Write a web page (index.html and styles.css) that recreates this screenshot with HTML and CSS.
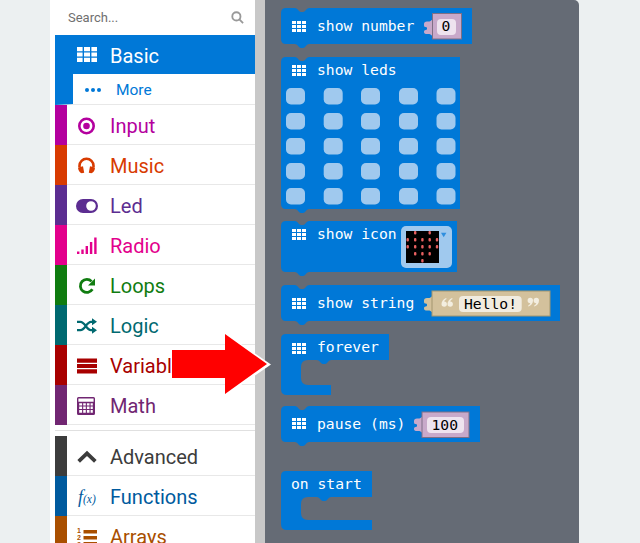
FILE: index.html
```html
<!DOCTYPE html>
<html lang="en">
<head>
<meta charset="utf-8">
<title>Basic blocks</title>
<link rel="stylesheet" href="styles.css">
</head>
<body>
<div class="page">
  <aside class="toolbox">
    <div class="search"><span>Search...</span>
      <svg class="search-icon" viewBox="0 0 14 14"><circle cx="5.8" cy="5.8" r="4.4"/><path d="M9 9l4 4"/></svg>
    </div>
    <div class="cat basic">
      <svg class="ico" viewBox="0 0 20 15"><path d="M0 0h5.600v4.200H0zM7 0h6v4.200H7zM14.400 0H20v4.200h-5.600zM0 5.400h5.600v4.200H0zM7 5.400h6v4.200H7zM14.400 5.400H20v4.200h-5.600zM0 10.800h5.600V15H0zM7 10.800h6V15H7zM14.400 10.800H20V15h-5.600z"/></svg>
      <span>Basic</span>
    </div>
    <div class="more">
      <svg class="ico-more" viewBox="0 0 16 4"><circle cx="2" cy="2" r="2"/><circle cx="8" cy="2" r="2"/><circle cx="14" cy="2" r="2"/></svg>
      <span>More</span>
    </div>
    <div class="cat row c-input">
      <svg class="ico" viewBox="0 0 20 20"><circle cx="9.500" cy="10" r="7.200" fill="none" stroke="currentColor" stroke-width="2.600"/><circle cx="9.500" cy="10" r="3.300"/></svg>
      <span>Input</span>
    </div>
    <div class="cat row c-music">
      <svg class="ico" viewBox="0 0 20 20"><path d="M2.500 11V9.800a7 7 0 0 1 14 0V11" fill="none" stroke="currentColor" stroke-width="2.600"/><path d="M1 11.500l5-1.200 1.200 6.500-2.500.5C2.500 16.500 1 14 1 11.500zM18 11.500l-5-1.200-1.200 6.500 2.500.5c2.200-.5 3.700-3 3.700-5.800z"/></svg>
      <span>Music</span>
    </div>
    <div class="cat row c-led">
      <svg class="ico ico-led" viewBox="0 0 22 14"><path fill-rule="evenodd" d="M7 0h8a7 7 0 0 1 0 14H7A7 7 0 0 1 7 0zm8 2.200a4.800 4.800 0 1 0 0 9.600 4.800 4.800 0 0 0 0-9.600z"/></svg>
      <span>Led</span>
    </div>
    <div class="cat row c-radio">
      <svg class="ico" viewBox="0 0 20 20"><path d="M0 15.500h2.400v2.500H0zM4.300 13.500h2.400V18H4.300zM8.600 10h2.400v8H8.600zM12.900 6h2.400v12h-2.400zM17.200 1.500h2.400V18h-2.400z"/></svg>
      <span>Radio</span>
    </div>
    <div class="cat row c-loops">
      <svg class="ico" viewBox="0 0 20 20"><path d="M15.400 13.300A6.500 6.500 0 1 1 14.600 5.400" fill="none" stroke="currentColor" stroke-width="2.800"/><path d="M18 2.500v7h-7z"/></svg>
      <span>Loops</span>
    </div>
    <div class="cat row c-logic">
      <svg class="ico" viewBox="0 0 20 15.400"><path d="M0 3.500h3.500c4.500 0 6 8.400 10.500 8.400h2M0 11.900h3.500c4.500 0 6-8.400 10.500-8.400h2" fill="none" stroke="currentColor" stroke-width="2.200"/><path d="M15 0l5 3.500-5 3.500zM15 8.400l5 3.500-5 3.500z"/></svg>
      <span>Logic</span>
    </div>
    <div class="cat row c-vars">
      <svg class="ico" viewBox="0 0 20 15"><path d="M0 0h20v4.200H0zM0 5.400h20v4.200H0zM0 10.800h20V15H0z"/></svg>
      <span>Variables</span>
    </div>
    <div class="cat row c-math">
      <svg class="ico ico-math" viewBox="0 0 18 18"><path fill-rule="evenodd" d="M1.500 0h15A1.500 1.500 0 0 1 18 1.500v15a1.500 1.500 0 0 1-1.500 1.500h-15A1.500 1.500 0 0 1 0 16.500v-15A1.500 1.500 0 0 1 1.500 0zM1.400 1.400v3.400h15.200V1.400zM2.200 6.200v2.400h2.900V6.200zM6.200 6.200v2.400h2.600V6.200zM9.900 6.200v2.400h2.600V6.200zM13.600 6.200v2.400h2.200V6.200zM2.200 9.600v2.400h2.900V9.600zM6.200 9.600v2.400h2.600V9.600zM9.900 9.600v2.400h2.600V9.600zM13.600 9.600v2.400h2.200V9.600zM2.200 13v2.800h2.900V13zM6.200 13v2.800h2.600V13zM9.900 13v2.800h2.600V13zM13.600 13v2.800h2.200V13z"/></svg>
      <span>Math</span>
    </div>
    <div class="divider"></div>
    <div class="cat row c-adv">
      <svg class="ico" viewBox="0 0 18 12"><path d="M1.500 10L9 2.800l7.500 7.200" fill="none" stroke="currentColor" stroke-width="3.400"/></svg>
      <span>Advanced</span>
    </div>
    <div class="cat row c-func">
      <span class="ico fx"><i>f</i><small>(x)</small></span>
      <span>Functions</span>
    </div>
    <div class="cat row c-arr">
      <svg class="ico" viewBox="0 0 20 20"><path d="M6.500 3h13.500v3.400H6.500zM6.500 9h13.500v3.400H6.500zM6.500 15h13.500v3.400H6.500z"/><text x="0" y="6" class="arr-num">1</text><text x="0" y="13" class="arr-num">2</text><text x="0" y="20" class="arr-num">3</text></svg>
      <span>Arrays</span>
    </div>
  </aside>
  <div class="gutter"></div>
  <main class="workspace">
    <svg class="blocks" viewBox="0 0 314 543" width="314" height="543">
      <defs>
        <path id="grid" d="M0 0h4v3H0zM5 0h4v3H5zM10 0h4v3h-4zM0 4h4v3H0zM5 4h4v3H5zM10 4h4v3h-4zM0 8h4v3H0zM5 8h4v3H5zM10 8h4v3h-4z"/>
        <path id="tab" d="M168 19l-2.500 2-1 .5h-2.500q-3 0-3 2.500v1.500q0 1.500 1.500 1.500t1.500 1v1q0 1-1.500 1t-1.500 1.500v.5q0 2 3 2h2.500l1 .5 2.500 2z"/>
        <path id="qmark" d="M2.700 3.400a2.700 2.700 0 1 1-2.700 2.700C0 3.500 1.800 1 4.600 0l.5.900C3.700 1.700 3 2.500 2.700 3.400z"/>
        <g id="lquote"><use href="#qmark"/><use href="#qmark" x="6"/></g>
      </defs>

      <!-- show number -->
      <path class="blk" d="M16 13q0-5 5-5H30q2 0 4 3q1 1 2 1h2q1 0 2-1q2-3 4-3H207V44H44q-2 0-4 3q-1 1-2 1h-2q-1 0-2-1q-2-3-4-3H21q-5 0-5-5z"/>
      <use class="white" href="#grid" x="27" y="21"/>
      <text class="lbl" x="52" y="31">show number</text>
      <use class="num-tab" href="#tab"/>
      <rect class="num-plug" x="167.500" y="13.500" width="29" height="25.500"/>
      <rect class="field-num" x="172" y="19" width="19" height="16" rx="4"/>
      <text class="val" x="176.600" y="31">0</text>

      <!-- show leds -->
      <path class="blk" d="M16 62q0-5 5-5H30q2 0 4 3q1 1 2 1h2q1 0 2-1q2-3 4-3H195V209H44q-2 0-4 3q-1 1-2 1h-2q-1 0-2-1q-2-3-4-3H21q-5 0-5-5z"/>
      <use class="white" href="#grid" x="27" y="65"/>
      <text class="lbl" x="52" y="75">show leds</text>
      <g class="leds">
        <rect x="21" y="88" width="19" height="16.500" rx="5"/><rect x="58.700" y="88" width="19" height="16.500" rx="5"/><rect x="96" y="88" width="19" height="16.500" rx="5"/><rect x="134" y="88" width="19" height="16.500" rx="5"/><rect x="171.500" y="88" width="19" height="16.500" rx="5"/>
        <rect x="21" y="113" width="19" height="16.500" rx="5"/><rect x="58.700" y="113" width="19" height="16.500" rx="5"/><rect x="96" y="113" width="19" height="16.500" rx="5"/><rect x="134" y="113" width="19" height="16.500" rx="5"/><rect x="171.500" y="113" width="19" height="16.500" rx="5"/>
        <rect x="21" y="138" width="19" height="16.500" rx="5"/><rect x="58.700" y="138" width="19" height="16.500" rx="5"/><rect x="96" y="138" width="19" height="16.500" rx="5"/><rect x="134" y="138" width="19" height="16.500" rx="5"/><rect x="171.500" y="138" width="19" height="16.500" rx="5"/>
        <rect x="21" y="163" width="19" height="16.500" rx="5"/><rect x="58.700" y="163" width="19" height="16.500" rx="5"/><rect x="96" y="163" width="19" height="16.500" rx="5"/><rect x="134" y="163" width="19" height="16.500" rx="5"/><rect x="171.500" y="163" width="19" height="16.500" rx="5"/>
        <rect x="21" y="188" width="19" height="16.500" rx="5"/><rect x="58.700" y="188" width="19" height="16.500" rx="5"/><rect x="96" y="188" width="19" height="16.500" rx="5"/><rect x="134" y="188" width="19" height="16.500" rx="5"/><rect x="171.500" y="188" width="19" height="16.500" rx="5"/>
      </g>

      <!-- show icon -->
      <path class="blk" d="M16 226q0-5 5-5H30q2 0 4 3q1 1 2 1h2q1 0 2-1q2-3 4-3H192V272H44q-2 0-4 3q-1 1-2 1h-2q-1 0-2-1q-2-3-4-3H21q-5 0-5-5z"/>
      <use class="white" href="#grid" x="27" y="229"/>
      <text class="lbl" x="52" y="239">show icon</text>
      <rect class="leds-solid" x="136" y="226" width="51" height="42" rx="5"/>
      <rect class="matrix" x="141" y="231" width="33" height="32"/>
      <g class="pix">
        <rect x="149" y="231" width="2.400" height="3.600" rx="1"/><rect x="163.500" y="231" width="2.400" height="3.600" rx="1"/>
        <rect x="141.500" y="238" width="2.400" height="3.600" rx="1"/><rect x="149" y="238" width="2.400" height="3.600" rx="1"/><rect x="156.200" y="238" width="2.400" height="3.600" rx="1"/><rect x="163.500" y="238" width="2.400" height="3.600" rx="1"/><rect x="170.800" y="238" width="2.400" height="3.600" rx="1"/>
        <rect x="141.500" y="245" width="2.400" height="3.600" rx="1"/><rect x="149" y="245" width="2.400" height="3.600" rx="1"/><rect x="156.200" y="245" width="2.400" height="3.600" rx="1"/><rect x="163.500" y="245" width="2.400" height="3.600" rx="1"/><rect x="170.800" y="245" width="2.400" height="3.600" rx="1"/>
        <rect x="149" y="252" width="2.400" height="3.600" rx="1"/><rect x="156.200" y="252" width="2.400" height="3.600" rx="1"/><rect x="163.500" y="252" width="2.400" height="3.600" rx="1"/>
        <rect x="156.200" y="259" width="2.400" height="3.600" rx="1"/>
      </g>
      <path class="caret" d="M176 232.700h5.400l-2.700 4.600z"/>

      <!-- show string -->
      <path class="blk" d="M16 290q0-5 5-5H30q2 0 4 3q1 1 2 1h2q1 0 2-1q2-3 4-3H295V321H44q-2 0-4 3q-1 1-2 1h-2q-1 0-2-1q-2-3-4-3H21q-5 0-5-5z"/>
      <use class="white" href="#grid" x="27" y="298"/>
      <text class="lbl" x="52" y="308">show string</text>
      <use class="str-tab" href="#tab" y="276.500"/>
      <rect class="str-plug" x="167" y="291" width="118" height="25"/>
      <use class="quote" href="#lquote" x="176.500" y="298"/>
      <rect class="field-str" x="194" y="296" width="62.700" height="16" rx="4"/>
      <text class="val" x="199" y="308.500">Hello!</text>
      <use class="quote" href="#lquote" transform="rotate(180 268.500 302.300)" x="263" y="298"/>

      <!-- forever -->
      <path class="blk" d="M16 339q0-5 5-5H124V360H66q-2 0-4 3q-1 1-2 1h-2q-1 0-2-1q-2-3-4-3H43q-7 0-7 7V378q0 7 7 7H66V395H22q-6 0-6-6z"/>
      <use class="white" href="#grid" x="27" y="343"/>
      <text class="lbl" x="52" y="352">forever</text>

      <!-- pause -->
      <path class="blk" d="M16 411q0-5 5-5H30q2 0 4 3q1 1 2 1h2q1 0 2-1q2-3 4-3H215V442H44q-2 0-4 3q-1 1-2 1h-2q-1 0-2-1q-2-3-4-3H21q-5 0-5-5z"/>
      <use class="white" href="#grid" x="27" y="418"/>
      <text class="lbl" x="52" y="429">pause (ms)</text>
      <use class="num-tab" href="#tab" x="-10" y="397"/>
      <rect class="num-plug" x="157" y="412" width="47" height="25.500"/>
      <rect class="field-num" x="162" y="417" width="37" height="16" rx="4"/>
      <text class="val" x="166.500" y="430">100</text>

      <!-- on start -->
      <path class="blk" d="M16 476q0-5 5-5H107V497H66q-2 0-4 3q-1 1-2 1h-2q-1 0-2-1q-2-3-4-3H43q-7 0-7 7V513q0 7 7 7H107V530H22q-6 0-6-6z"/>
      <text class="lbl" x="26" y="489">on start</text>
    </svg>
  </main>
  <svg class="arrow" viewBox="0 0 102 64" width="102" height="64">
    <path class="arrow-halo" d="M53 -1L99 30.500 53 62V44H0V16h53z"/>
    <path class="arrow-fill" d="M53 0L95 30 53 60V44H0V16h53z"/>
  </svg>
</div>
</body>
</html>
```
FILE: styles.css
```css
* { box-sizing: border-box; }
html, body { margin: 0; padding: 0; }
body { width: 640px; height: 543px; overflow: hidden; background: #ecf0f1; font-family: Roboto, sans-serif; }
.page { position: relative; display: flex; width: 640px; height: 543px; padding-right: 61px; padding-left: 55px; overflow: hidden; background: linear-gradient(to right, #ecf0f1 0 50px, #fff 50px 55px, #ecf0f1 55px); }
.toolbox { display: flex; flex-direction: column; width: 200px; height: 543px; flex: none; overflow: hidden; background: #fff; }
.search { display: flex; align-items: center; justify-content: space-between; height: 35px; flex: none; padding: 0 11px 1px 13px; font-size: 13px; color: #6f6f6f; }
.search-icon { width: 13px; height: 13px; fill: none; stroke: #999; stroke-width: 2; }
.cat { display: flex; align-items: center; flex: none; height: 40px; font-size: 20px; line-height: 1; }
.cat > span:last-child { white-space: nowrap; }
.ico { width: 20px; height: 20px; margin-right: 13px; fill: currentColor; flex: none; overflow: visible; }
.basic { height: 39px; padding-left: 22px; color: #fff; background: #0078d7; }
.basic > span { padding-top: 2px; }
.basic .ico { height: 15px; }
.more { display: flex; align-items: center; height: 31px; flex: none; padding: 2px 0 0 12px; font-size: 15.500px; color: #0078d7; background: #fff; border-left: 18px solid #0078d7; border-bottom: 1px solid #e8e8e8; }
.ico-more { width: 16px; height: 4px; margin-right: 15px; fill: #0078d7; }
.row { padding: 2px 0 0 22px; box-shadow: inset 12px 0 0 currentColor; background: linear-gradient(#e8e8e8, #e8e8e8) 12px 100% / 100% 1px no-repeat; }
.divider { height: 6px; flex: none; border-bottom: 1px solid #e0e0e0; margin-bottom: 5px; }
.c-input { color: #b4009e; }
.c-music { color: #d83b01; }
.c-led { color: #5c2d91; }
.c-led .ico-led { width: 22px; height: 14px; margin-left: -1px; margin-right: 12px; }
.c-radio { color: #e3008c; }
.c-loops { color: #107c10; }
.c-logic { color: #006970; }
.c-vars { color: #a80000; }
.c-math { color: #712672; }
.c-adv { color: #3c3c3c; }
.c-func { color: #005a9e; }
.c-arr { color: #a94f00; }
.c-math .ico-math { width: 18px; height: 18px; margin-right: 15px; }
.fx { display: flex; align-items: baseline; width: 20px; height: auto; padding-left: 1px; font-family: "Liberation Serif", serif; font-size: 18px; }
.fx small { font-size: 11.500px; font-style: italic; }
.arr-num { font-family: "Liberation Sans", sans-serif; font-size: 7px; font-weight: 700; }
.gutter { width: 10px; flex: none; background: #c8c8c8; }
.workspace { width: 314px; height: 543px; flex: none; background: #656b75; border-top-right-radius: 5px; }
.blocks { display: block; }
.blk { fill: #0078d7; }
.white { fill: #fff; }
.lbl { font-family: "DejaVu Sans Mono", monospace; font-size: 14.700px; fill: #fff; }
.val { font-family: "DejaVu Sans Mono", monospace; font-size: 14.700px; fill: #000; }
.quote { fill: #f3eee0; }
.num-tab { fill: #c8a9ca; }
.num-plug { fill: #c8a9ca; stroke: #7f6f85; stroke-width: 1; }
.field-num { fill: #eee3ef; }
.str-tab { fill: #d3c19c; }
.str-plug { fill: #d3c19c; stroke: #a3966f; stroke-width: 1; }
.field-str { fill: #f1ece0; }
.leds rect { fill: #a0c9ee; }
.leds-solid { fill: #a0c9ee; }
.matrix { fill: #000; }
.pix rect { fill: #e86060; }
.caret { fill: #2f8fdf; }
.arrow { position: absolute; left: 172px; top: 334px; }
.arrow-halo { fill: #fff; }
.arrow-fill { fill: #f00; }
```
